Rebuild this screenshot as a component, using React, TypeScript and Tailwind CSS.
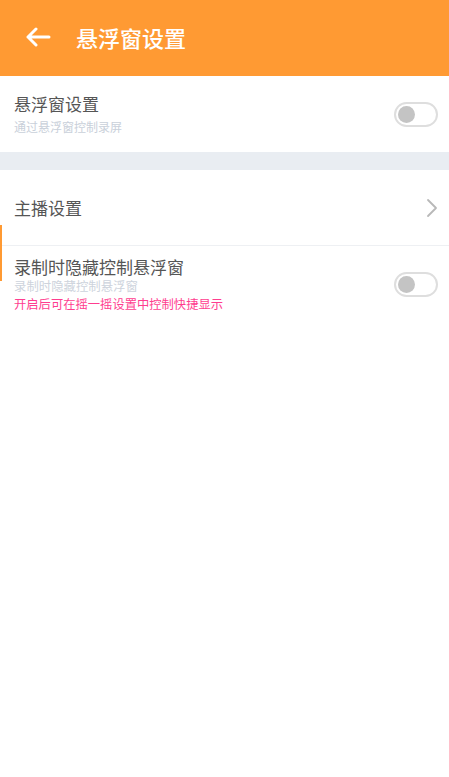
import { useState } from "react"

const FONT = "font-['Noto_Sans_CJK_SC','Noto_Sans',sans-serif]"

function Toggle({ on, onChange }: { on: boolean; onChange: (v: boolean) => void }) {
  return (
    <button
      onClick={() => onChange(!on)}
      className={`flex h-[25px] w-[44px] items-center rounded-full border-2 px-[2px] ${
        on ? "justify-end border-[#ff9a33] bg-[#ff9a33]" : "justify-start border-[#dedede] bg-white"
      }`}
    >
      <span className={`h-[17px] w-[17px] rounded-full ${on ? "bg-white" : "bg-[#c4c4c4]"}`} />
    </button>
  )
}

export default function App() {
  const [floatOn, setFloatOn] = useState(false)
  const [hideOn, setHideOn] = useState(false)

  return (
    <div className={`relative min-h-[777px] w-full bg-white ${FONT}`}>
      <div className="flex h-[76px] items-center bg-[#ff9a33] pb-[2px]">
        <button className="ml-[25px] flex h-6 w-7 items-center">
          <svg width="26" height="20" viewBox="0 0 26 20" fill="none">
            <path d="M24 10H3M11 2L3 10l8 8" stroke="white" strokeWidth="3" strokeLinecap="round" strokeLinejoin="round" />
          </svg>
        </button>
        <h1 className="ml-[23px] text-[22px] font-medium leading-none text-white">悬浮窗设置</h1>
      </div>

      <div className="flex h-[76px] items-center justify-between pl-[14px] pr-[11px]">
        <div className="flex flex-col">
          <span className="text-[17px] leading-[22px] text-[#555]">悬浮窗设置</span>
          <span className="mt-[3px] text-[12px] leading-[18px] text-[#c9d0da]">通过悬浮窗控制录屏</span>
        </div>
        <Toggle on={floatOn} onChange={setFloatOn} />
      </div>

      <div className="h-[18px] bg-[#e9edf2]" />

      <div className="flex h-[76px] items-center justify-between border-b border-[#eef0f3] pl-[14px] pr-[11px]">
        <span className="text-[17px] leading-[22px] text-[#555]">主播设置</span>
        <svg width="12" height="20" viewBox="0 0 12 20" fill="none">
          <path d="M2 2l8 8-8 8" stroke="#b8b8b8" strokeWidth="1.8" strokeLinecap="round" strokeLinejoin="round" />
        </svg>
      </div>

      <div className="flex h-[77px] items-center justify-between pl-[14px] pr-[11px]">
        <div className="flex flex-col">
          <span className="text-[17px] leading-[20px] text-[#555]">录制时隐藏控制悬浮窗</span>
          <span className="text-[12.4px] leading-[18px] text-[#cdd3dc]">录制时隐藏控制悬浮窗</span>
          <span className="text-[12.3px] leading-[18px] text-[#ff3d8f]">开启后可在摇一摇设置中控制快捷显示</span>
        </div>
        <Toggle on={hideOn} onChange={setHideOn} />
      </div>

      <div className="absolute left-0 top-[225px] h-[56px] w-[2px] bg-[#ff9a33]" />
    </div>
  )
}
